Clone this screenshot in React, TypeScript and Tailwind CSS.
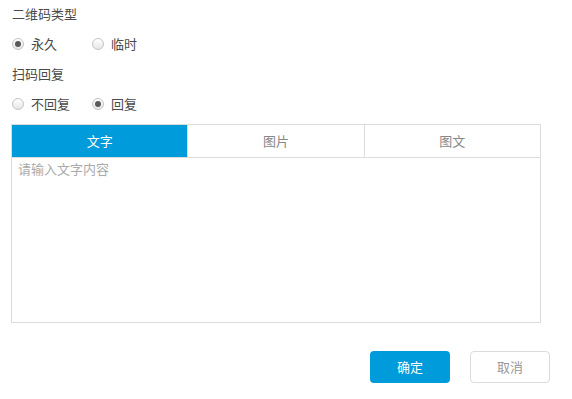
import { useState } from "react";

const font = { fontFamily: '"Microsoft YaHei", "Noto Sans CJK SC", "Noto Sans", sans-serif' };

type RadioProps = { label: string; checked: boolean; onClick: () => void };

function Radio({ label, checked, onClick }: RadioProps) {
  return (
    <button type="button" onClick={onClick} className="flex w-[80px] items-center gap-[7px] text-[13px] text-[#4a4a4a]">
      <span className="flex h-[12px] w-[12px] items-center justify-center rounded-full border border-[#c4c4c4] bg-gradient-to-b from-[#ffffff] to-[#e6e6e6]">
        {checked && <span className="h-[6px] w-[6px] rounded-full bg-[#5a5a5a]" />}
      </span>
      {label}
    </button>
  );
}

const tabs = ["文字", "图片", "图文"];

export default function App() {
  const [codeType, setCodeType] = useState("forever");
  const [reply, setReply] = useState(true);
  const [tab, setTab] = useState(0);

  return (
    <div style={font} className="h-[399px] w-[572px] bg-white pl-[12px] pt-[4px]">
      <div className="h-[20px] text-[13px] leading-[20px] text-[#4a4a4a]">二维码类型</div>
      <div className="mt-[10px] flex h-[20px] items-center">
        <Radio label="永久" checked={codeType === "forever"} onClick={() => setCodeType("forever")} />
        <Radio label="临时" checked={codeType === "temp"} onClick={() => setCodeType("temp")} />
      </div>
      <div className="mt-[10px] h-[20px] text-[13px] leading-[20px] text-[#4a4a4a]">扫码回复</div>
      <div className="mt-[10px] flex h-[20px] items-center">
        <Radio label="不回复" checked={!reply} onClick={() => setReply(false)} />
        <Radio label="回复" checked={reply} onClick={() => setReply(true)} />
      </div>

      <div className="ml-[-1px] mt-[10px] w-[530px] border border-[#dcdcdc]">
        <div className="flex h-[33px] border-b border-[#dcdcdc]">
          {tabs.map((t, i) => (
            <button
              key={t}
              type="button"
              onClick={() => setTab(i)}
              className={
                i === tab
                  ? "flex-1 bg-[#009bdb] text-[13px] text-white"
                  : "flex-1 border-l border-[#dcdcdc] text-[13px] text-[#888] first:border-l-0"
              }
            >
              {t}
            </button>
          ))}
        </div>
        <textarea
          placeholder="请输入文字内容"
          className="block h-[164px] w-full resize-none px-[6px] py-[1px] text-[13px] leading-[20px] text-[#444] outline-none placeholder:text-[#aaa]"
        />
      </div>

      <div className="mt-[28px] flex justify-end gap-[20px] pr-[22px]">
        <button type="button" className="h-[32px] w-[80px] rounded-[4px] bg-[#009bdb] text-[13px] text-white">
          确定
        </button>
        <button type="button" className="h-[32px] w-[80px] rounded-[4px] border border-[#dcdcdc] bg-white text-[13px] text-[#999]">
          取消
        </button>
      </div>
    </div>
  );
}
